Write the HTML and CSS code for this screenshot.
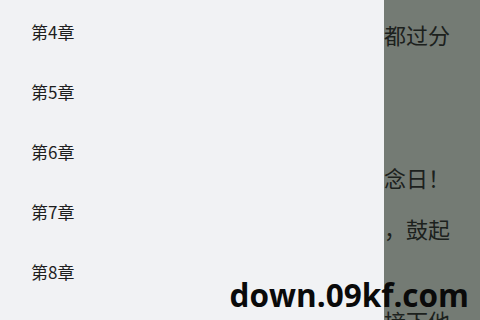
FILE: index.html
```html
<!DOCTYPE html>
<html lang="zh-CN">
<head>
<meta charset="utf-8">
<link rel="stylesheet" href="styles.css">
</head>
<body>
<div class="screen">
  <main class="reader">
    <p>她看着窗外的雨，心想这一切未免也都过分</p>
    <p>他没有说话。<br>只是静静地看着她。<br>今天是他们两人相识以来的第一个纪念日！</p>
    <p>她深吸了一口气，把手轻轻放在胸口，鼓起<br>勇气开口。<br>他愣了一下，随后便笑着伸出手轻轻接下他</p>
  </main>
  <aside class="drawer">
    <ul class="chapters">
      <li class="chapter">第4章</li>
      <li class="chapter">第5章</li>
      <li class="chapter">第6章</li>
      <li class="chapter">第7章</li>
      <li class="chapter">第8章</li>
    </ul>
  </aside>
  <div class="watermark">down.09kf.com</div>
</div>
</body>
</html>
```

FILE: styles.css
```css
html, body {
  margin: 0;
  padding: 0;
}
body {
  width: 480px;
  height: 320px;
  overflow: hidden;
  font-family: "Noto Sans CJK SC", "Noto Sans", sans-serif;
}
.screen {
  position: relative;
  width: 480px;
  height: 320px;
  overflow: hidden;
  background: #747b74;
}
.reader {
  padding: 11px 30px 0 32px;
  width: 418px;
  color: #1c211d;
  font-size: 22px;
  line-height: 46px;
}
.reader p {
  margin: 0 0 5px;
  white-space: nowrap;
}
.drawer {
  position: absolute;
  left: 0;
  top: 0;
  width: 384px;
  height: 320px;
  background: #f1f2f4;
}
.chapters {
  list-style: none;
  margin: 0;
  padding: 2px 0 0 31px;
}
.chapter {
  height: 60px;
  line-height: 60px;
  font-size: 17px;
  color: #1e1e1e;
}
.watermark {
  position: absolute;
  right: 11px;
  bottom: 4px;
  font-family: "Open Sans", sans-serif;
  font-weight: 700;
  font-size: 31.5px;
  color: #0a0a0a;
}
```
